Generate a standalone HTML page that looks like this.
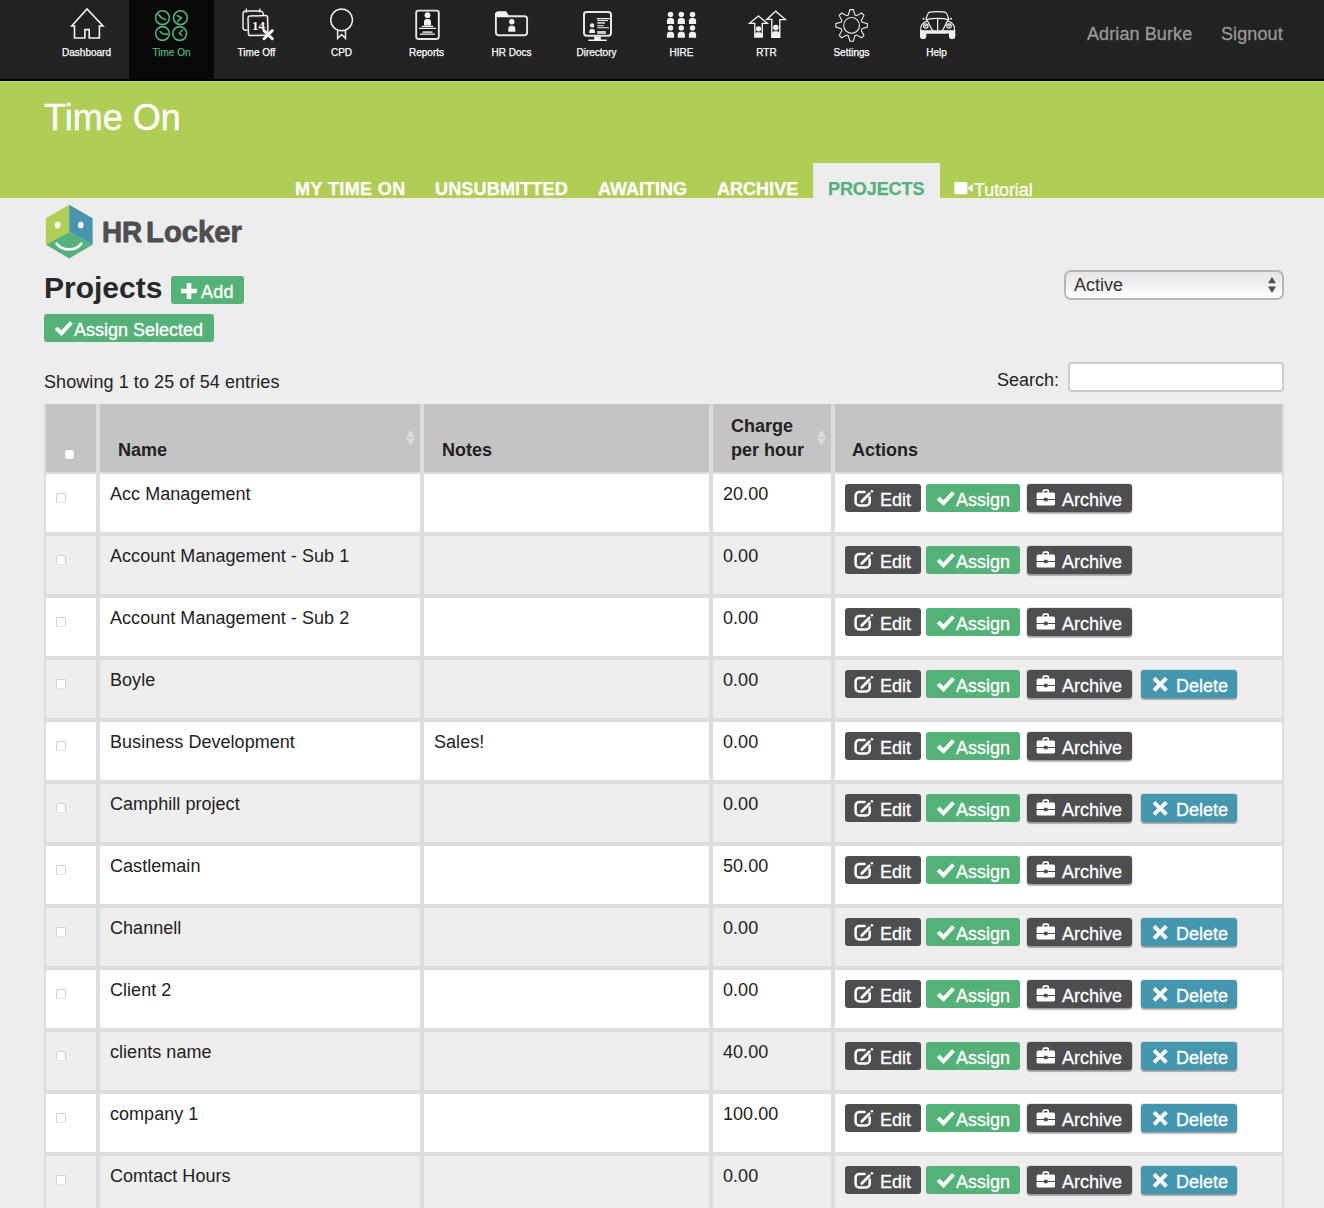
<!DOCTYPE html>
<html lang="en"><head><meta charset="utf-8"><title>Time On - Projects</title>
<style>
*{box-sizing:border-box;margin:0;padding:0}
html,body{width:1324px;height:1208px;overflow:hidden;background:#ededed}
body{font-family:"Liberation Sans",Arial,Helvetica,sans-serif;font-size:18px;color:#222;position:relative}
#nav{position:absolute;left:0;top:0;width:1324px;height:81px;background:#222;border-bottom:2px solid #000}
.ni{position:absolute;top:0;width:85px;height:79px;color:#fff;font-size:10px;text-align:center}
.ni.act{background:#080808;color:#52b27a}
.ni svg{position:absolute;left:0;top:0;width:85px;height:48px;overflow:visible}
.ni .lb{position:absolute;left:0;width:85px;top:47px;line-height:12px;font-size:10px;letter-spacing:0px;-webkit-text-stroke:.25px}
.usr{position:absolute;top:23px;font-size:18px;line-height:22px;color:#999;white-space:nowrap;letter-spacing:.1px;-webkit-text-stroke:.3px}
#band{position:absolute;left:0;top:81px;width:1324px;height:117px;background:#b0ce56;overflow:hidden;box-shadow:inset 0 1px 0 #bcd95d}
#band h1{position:absolute;left:44px;top:16px;font-size:36px;line-height:42px;font-weight:normal;color:#fff;white-space:nowrap;-webkit-text-stroke:.4px}
.tab{position:absolute;top:97px;font-size:18px;line-height:22px;font-weight:bold;color:#fff;white-space:nowrap;letter-spacing:.3px;-webkit-text-stroke:.25px}
#ptab{position:absolute;left:813px;top:82px;width:127px;height:40px;background:#ededed}

h2{position:absolute;left:44px;top:269px;font-size:30px;line-height:38px;font-weight:bold;color:#282828;white-space:nowrap}
.gb{position:absolute;background:#54b177;border-radius:3px;color:#fff;font-size:18px;line-height:22px;white-space:nowrap;-webkit-text-stroke:.3px}
#sel{position:absolute;left:1064px;top:270px;width:220px;height:30px;border:2px solid #b6b6b6;border-radius:7px;background:linear-gradient(#e6e6e6,#efefef 45%,#fdfdfd 85%,#fff);font-size:18px;line-height:26px;color:#333;padding-left:8px}
#sel svg{position:absolute;right:6px;top:5px}
#info{position:absolute;left:44px;top:371px;line-height:22px;white-space:nowrap;letter-spacing:.08px}
#slab{position:absolute;left:997px;top:369px;line-height:22px;white-space:nowrap}
#sin{position:absolute;left:1068px;top:362px;width:216px;height:30px;background:#fff;border:2px solid #ccc;border-radius:4px}
#tbl{position:absolute;left:44px;top:404px;width:1240px;height:804px;background:#dddddd}
.th{position:absolute;top:404px;height:68px;background:#c4c4c4;font-weight:bold;font-size:18px;color:#222}
.th span{position:absolute;white-space:nowrap;line-height:24px}
.tr{position:absolute;left:0;width:1324px;height:58px}
.td{position:absolute;top:0;height:58px}
.odd .td{background:#fff}
.even .td{background:#eeeeee}
.c1{left:46px;width:50px}
.c2{left:100px;width:320px}
.c3{left:424px;width:285px}
.c4{left:713px;width:118px}
.c5{left:835px;width:447px}
.tx{position:absolute;left:10px;top:9px;line-height:22px;white-space:nowrap;letter-spacing:.04px}
.cb{position:absolute;left:10px;top:19px;width:10px;height:10px;border:1px solid #d0d0d0;border-bottom-color:#e6e6e6;border-radius:2px;background:#fff}
.btn{position:absolute;top:10px;height:28px;border-radius:3px;color:#fff;font-size:18px}
.btn .t{position:absolute;top:5px;line-height:22px;white-space:nowrap;-webkit-text-stroke:.3px}
.dk{background:#4d4e50}
.gr{background:#54b177}
.bl{background:#4597b0}
.sh{box-shadow:0 0 0 1px rgba(0,0,0,.09),0 2px 1px rgba(0,0,0,.28)}
.ic{position:absolute;left:0;top:0;width:40px;height:28px}

.sort{position:absolute;width:9px;height:15.500px}
</style></head><body>
<div id="nav"><div class="ni" style="left:44px"><svg viewBox="0 0 85 48"><path d="M27.700 26L43 8.900 59 26H55.400V38H45.200V29.600H40.900V38H30.500V26z" fill="none" stroke="#f2f2f2" stroke-width="1.600" stroke-linejoin="miter"/></svg><span class="lb">Dashboard</span></div>
<div class="ni act" style="left:129px"><svg viewBox="0 0 85 48"><circle cx="33.500" cy="17.700" r="6.900" fill="none" stroke="#52b27a" stroke-width="1.600" stroke-linecap="round" stroke-linejoin="round"/><circle cx="51.400" cy="17.700" r="6.900" fill="none" stroke="#52b27a" stroke-width="1.600" stroke-linecap="round" stroke-linejoin="round"/><circle cx="33.500" cy="33.500" r="6.900" fill="none" stroke="#52b27a" stroke-width="1.600" stroke-linecap="round" stroke-linejoin="round"/><circle cx="50.700" cy="33.500" r="6.900" fill="none" stroke="#52b27a" stroke-width="1.600" stroke-linecap="round" stroke-linejoin="round"/><path d="M29.600 14.600L32.600 17.900 36.500 19.600" fill="none" stroke="#52b27a" stroke-width="1.600" stroke-linecap="round" stroke-linejoin="round"/><path d="M48.300 15.700L52.500 17.700 48.600 21.400" fill="none" stroke="#52b27a" stroke-width="1.600" stroke-linecap="round" stroke-linejoin="round"/><path d="M31.200 31.600L33.800 33.800 38.500 34.400" fill="none" stroke="#52b27a" stroke-width="1.600" stroke-linecap="round" stroke-linejoin="round"/><path d="M53.600 30L50.200 33.300 52.900 35.500" fill="none" stroke="#52b27a" stroke-width="1.600" stroke-linecap="round" stroke-linejoin="round"/></svg><span class="lb">Time On</span></div>
<div class="ni" style="left:214px"><svg viewBox="0 0 85 48"><path d="M33.500 30.300H31.800A2.800 2.800 0 0 1 29 27.500V14A3 3 0 0 1 32 11H46.300A3 3 0 0 1 49.300 14V15.500" fill="none" stroke="#f2f2f2" stroke-width="1.400"/><path d="M32.400 8.400V12.800M45.800 8.400V12.800" fill="none" stroke="#f2f2f2" stroke-width="1.200"/><rect x="34.200" y="15.800" width="19.600" height="19.600" rx="2.200" transform="rotate(-1.5 44 25.600)" fill="#1c1c1c" stroke="#f2f2f2" stroke-width="1.500"/><rect x="36" y="17.600" width="16" height="16" rx=".6" transform="rotate(-1.5 44 25.600)" fill="none" stroke="#555" stroke-width=".5"/><text x="44.400" y="29.500" font-family="Liberation Serif, serif" font-weight="bold" font-size="13" text-anchor="middle" fill="#fff">14</text><path d="M50 30.600L58.300 38.800M58.300 30.600L50 38.800" stroke="#f2f2f2" stroke-width="2.900" stroke-linecap="round" fill="none"/></svg><span class="lb">Time Off</span></div>
<div class="ni" style="left:299px"><svg viewBox="0 0 85 48"><path d="M53.10 19.90 L53.27 20.28 L53.39 20.67 L53.45 21.07 L53.44 21.46 L53.34 21.84 L53.17 22.20 L52.94 22.54 L52.67 22.86 L52.73 23.27 L52.74 23.68 L52.68 24.08 L52.56 24.45 L52.36 24.79 L52.09 25.08 L51.78 25.35 L51.43 25.58 L51.37 25.99 L51.26 26.38 L51.10 26.75 L50.88 27.07 L50.59 27.34 L50.25 27.55 L49.87 27.71 L49.48 27.84 L49.30 28.21 L49.08 28.56 L48.83 28.87 L48.52 29.11 L48.17 29.29 L47.78 29.39 L47.38 29.44 L46.96 29.45 L46.68 29.76 L46.38 30.04 L46.05 30.26 L45.68 30.41 L45.30 30.48 L44.90 30.47 L44.49 30.40 L44.09 30.29 L43.74 30.51 L43.37 30.69 L42.99 30.81 L42.60 30.85 L42.21 30.81 L41.83 30.69 L41.46 30.51 L41.11 30.29 L40.71 30.40 L40.30 30.47 L39.90 30.48 L39.52 30.41 L39.15 30.26 L38.82 30.04 L38.52 29.76 L38.24 29.45 L37.82 29.44 L37.42 29.39 L37.03 29.29 L36.68 29.11 L36.37 28.87 L36.12 28.56 L35.90 28.21 L35.72 27.84 L35.33 27.71 L34.95 27.55 L34.61 27.34 L34.32 27.07 L34.10 26.75 L33.94 26.38 L33.83 25.99 L33.77 25.58 L33.42 25.35 L33.11 25.08 L32.84 24.79 L32.64 24.45 L32.52 24.08 L32.46 23.68 L32.47 23.27 L32.53 22.86 L32.26 22.54 L32.03 22.20 L31.86 21.84 L31.76 21.46 L31.75 21.07 L31.81 20.67 L31.93 20.28 L32.10 19.90 L31.93 19.52 L31.81 19.13 L31.75 18.73 L31.76 18.34 L31.86 17.96 L32.03 17.60 L32.26 17.26 L32.53 16.94 L32.47 16.53 L32.46 16.12 L32.52 15.72 L32.64 15.35 L32.84 15.01 L33.11 14.72 L33.42 14.45 L33.77 14.22 L33.83 13.81 L33.94 13.42 L34.10 13.05 L34.32 12.73 L34.61 12.46 L34.95 12.25 L35.33 12.09 L35.72 11.96 L35.90 11.59 L36.12 11.24 L36.37 10.93 L36.68 10.69 L37.03 10.51 L37.42 10.41 L37.82 10.36 L38.24 10.35 L38.52 10.04 L38.82 9.76 L39.15 9.54 L39.52 9.39 L39.90 9.32 L40.30 9.33 L40.71 9.40 L41.11 9.51 L41.46 9.29 L41.83 9.11 L42.21 8.99 L42.60 8.95 L42.99 8.99 L43.37 9.11 L43.74 9.29 L44.09 9.51 L44.49 9.40 L44.90 9.33 L45.30 9.32 L45.68 9.39 L46.05 9.54 L46.38 9.76 L46.68 10.04 L46.96 10.35 L47.38 10.36 L47.78 10.41 L48.17 10.51 L48.52 10.69 L48.83 10.93 L49.08 11.24 L49.30 11.59 L49.48 11.96 L49.87 12.09 L50.25 12.25 L50.59 12.46 L50.88 12.73 L51.10 13.05 L51.26 13.42 L51.37 13.81 L51.43 14.22 L51.78 14.45 L52.09 14.72 L52.36 15.01 L52.56 15.35 L52.68 15.72 L52.74 16.12 L52.73 16.53 L52.67 16.94 L52.94 17.26 L53.17 17.60 L53.34 17.96 L53.44 18.34 L53.45 18.73 L53.39 19.13 L53.27 19.52 L53.10 19.90z" fill="none" stroke="#f2f2f2" stroke-width="1.500" stroke-linejoin="round"/><path d="M38.600 30.400V38.400L42.600 34.500 46.500 38.400V30" fill="none" stroke="#f2f2f2" stroke-width="1.500"/></svg><span class="lb">CPD</span></div>
<div class="ni" style="left:384px"><svg viewBox="0 0 85 48"><rect x="32.200" y="10.600" width="22.600" height="28.400" rx="2.200" fill="#1b1b1b" stroke="#e6e6e6" stroke-width="1.900"/><circle cx="43.5" cy="15.2" r="2.9" fill="#f2f2f2"/><path d="M40.00 25.6V21.98C40.00 19.30 41.75 19 43.5 19C45.25 19 47.00 19.30 47.00 21.98V25.6z" fill="#f2f2f2"/><path d="M37.800 26.300H49.200M34.900 28.400H52.100M36 34.200H51" stroke="#f2f2f2" stroke-width="1.300" fill="none"/><path d="M38.500 32.100H48.500" stroke="#cfcfcf" stroke-width="1.700" fill="none"/></svg><span class="lb">Reports</span></div>
<div class="ni" style="left:469px"><svg viewBox="0 0 85 48"><path d="M26.900 17.500V14.800A2.600 2.600 0 0 1 29.500 12.200H36.500L39.300 16.200H55.500A2.600 2.600 0 0 1 58.100 18.800V32.600A2.600 2.600 0 0 1 55.500 35.200H29.500A2.600 2.600 0 0 1 26.900 32.600z" fill="none" stroke="#e6e6e6" stroke-width="1.900"/><path d="M26 17.200V14.800A3 3 0 0 1 29 11.800H36.900L39.600 16V17.200z" fill="#f2f2f2"/><circle cx="42.8" cy="21.7" r="2.7" fill="#f2f2f2"/><path d="M39.30 31.7V28.78C39.30 26.10 41.05 25.8 42.8 25.8C44.55 25.8 46.30 26.10 46.30 28.78V31.7z" fill="#f2f2f2"/></svg><span class="lb">HR Docs</span></div>
<div class="ni" style="left:554px"><svg viewBox="0 0 85 48"><rect x="30" y="12.100" width="27" height="23.600" rx="2.600" fill="none" stroke="#e6e6e6" stroke-width="2"/><path d="M40.200 36.500H46.800V39.500H52.800V41H34.300V39.500H40.200z" fill="#f2f2f2"/><circle cx="38.1" cy="25.4" r="2.2" fill="#f2f2f2"/><path d="M35.30 32.9V31.38C35.30 29.30 36.70 29 38.1 29C39.50 29 40.90 29.30 40.90 31.38V32.9z" fill="#f2f2f2"/><path d="M42.800 18.600H55.700M43.300 20.500H54.100M43.300 25.700H49.800M43.300 27.700H55" stroke="#f2f2f2" stroke-width="1.150" fill="none"/><path d="M43.300 22.900H51" stroke="#d0d0d0" stroke-width="1.700" fill="none"/><rect x="43.300" y="31" width="8.600" height="2.900" fill="#d0d0d0"/></svg><span class="lb">Directory</span></div>
<div class="ni" style="left:639px"><svg viewBox="0 0 85 48"><circle cx="31.5" cy="14.5" r="2.75" fill="#f2f2f2"/><path d="M27.90 24.0V21.16C27.90 18.40 29.70 18.1 31.5 18.1C33.30 18.1 35.10 18.40 35.10 21.16V24.0z" fill="#f2f2f2"/><circle cx="31.5" cy="27.9" r="2.7" fill="#f2f2f2"/><path d="M27.90 37.8V34.76C27.90 32.00 29.70 31.7 31.5 31.7C33.30 31.7 35.10 32.00 35.10 34.76V37.8z" fill="#f2f2f2"/><circle cx="42.3" cy="14.5" r="2.75" fill="#f2f2f2"/><path d="M38.70 24.0V21.16C38.70 18.40 40.50 18.1 42.3 18.1C44.10 18.1 45.90 18.40 45.90 21.16V24.0z" fill="#f2f2f2"/><circle cx="42.3" cy="27.9" r="2.7" fill="#f2f2f2"/><path d="M38.70 37.8V34.76C38.70 32.00 40.50 31.7 42.3 31.7C44.10 31.7 45.90 32.00 45.90 34.76V37.8z" fill="#f2f2f2"/><circle cx="53.5" cy="14.5" r="2.75" fill="#f2f2f2"/><path d="M49.90 24.0V21.16C49.90 18.40 51.70 18.1 53.5 18.1C55.30 18.1 57.10 18.40 57.10 21.16V24.0z" fill="#f2f2f2"/><circle cx="53.5" cy="27.9" r="2.7" fill="#f2f2f2"/><path d="M49.90 37.8V34.76C49.90 32.00 51.70 31.7 53.5 31.7C55.30 31.7 57.10 32.00 57.10 34.76V37.8z" fill="#f2f2f2"/></svg><span class="lb">HIRE</span></div>
<div class="ni" style="left:724px"><svg viewBox="0 0 85 48"><path d="M34.400 15.900L25.600 23.300H30.800V37H38.300V23.300H43.300z" fill="none" stroke="#f2f2f2" stroke-width="1.350" stroke-linejoin="miter"/><path d="M51.600 11.200L42.800 19.400H47.800V37.200H55.800V19.600H61.400z" fill="none" stroke="#f2f2f2" stroke-width="1.350" stroke-linejoin="miter"/><circle cx="34.5" cy="28.8" r="2.6" fill="#f2f2f2"/><path d="M30.70 36.8V35.53C30.70 32.60 32.60 32.3 34.5 32.3C36.40 32.3 38.30 32.60 38.30 35.53V36.8z" fill="#f2f2f2"/><circle cx="51.8" cy="27.6" r="2.8" fill="#f2f2f2"/><path d="M47.70 37V34.69C47.70 31.50 49.75 31.2 51.8 31.2C53.85 31.2 55.90 31.50 55.90 34.69V37z" fill="#f2f2f2"/></svg><span class="lb">RTR</span></div>
<div class="ni" style="left:809px"><svg viewBox="0 0 85 48"><path d="M39.27 15.02 L40.93 9.59 L44.27 9.59 L45.93 15.02 L47.59 15.71 L52.60 13.04 L54.96 15.40 L52.29 20.41 L52.98 22.07 L58.41 23.73 L58.41 27.07 L52.98 28.73 L52.29 30.39 L54.96 35.40 L52.60 37.76 L47.59 35.09 L45.93 35.78 L44.27 41.21 L40.93 41.21 L39.27 35.78 L37.61 35.09 L32.60 37.76 L30.24 35.40 L32.91 30.39 L32.22 28.73 L26.79 27.07 L26.79 23.73 L32.22 22.07 L32.91 20.41 L30.24 15.40 L32.60 13.04 L37.61 15.71z" fill="none" stroke="#e8e8e8" stroke-width="1.100" stroke-linejoin="miter"/><circle cx="42.6" cy="25.4" r="7.900" fill="none" stroke="#dcdcdc" stroke-width="1.150"/></svg><span class="lb">Settings</span></div>
<div class="ni" style="left:894px"><svg viewBox="0 0 85 48"><path d="M32 19.300C32.800 16 33.600 13.300 35 12.400C38 11.300 48.600 11.300 51.600 12.400C53 13.300 53.900 16 54.800 19.300" fill="none" stroke="#f2f2f2" stroke-width="1.200" stroke-linecap="round" stroke-linejoin="round"/><path d="M32.600 19.600C38 17.900 49 17.900 54.400 19.600" fill="none" stroke="#f2f2f2" stroke-width="1.200" stroke-linecap="round" stroke-linejoin="round"/><path d="M43.650 18.600V30.600" fill="none" stroke="#f2f2f2" stroke-width="1.200" stroke-linecap="round" stroke-linejoin="round" stroke-width="1.400"/><path d="M32.700 20.200C35.500 23 36.300 28.500 38.900 30.600M54.200 20.200C51.300 23 50.600 28.500 48 30.600" fill="none" stroke="#f2f2f2" stroke-width="1.200" stroke-linecap="round" stroke-linejoin="round"/><path d="M26.600 31C26.300 25.500 28.500 22.800 32.600 21.300M60.600 31C60.900 25.500 58.700 22.800 54.600 21.300" fill="none" stroke="#f2f2f2" stroke-width="1.200" stroke-linecap="round" stroke-linejoin="round"/><circle cx="31.800" cy="26" r="2.200" fill="none" stroke="#f2f2f2" stroke-width="1.200" stroke-linecap="round" stroke-linejoin="round"/><circle cx="55" cy="26" r="2.200" fill="none" stroke="#f2f2f2" stroke-width="1.200" stroke-linecap="round" stroke-linejoin="round"/><circle cx="31.800" cy="25.700" r="1" fill="#ddd"/><circle cx="55" cy="25.700" r="1" fill="#ddd"/><circle cx="29.500" cy="18.700" r="1" fill="#f2f2f2"/><circle cx="57.100" cy="18.700" r="1" fill="#f2f2f2"/><path d="M26 30.200H61.200V33.400H55V35.500A3.100 3.100 0 0 0 61.200 35.800V30.200M26 30.200V35.800A3.100 3.100 0 0 0 32.200 35.800V33.400H55" fill="#f2f2f2"/><path d="M26 30.200H61.200V35.900A3.100 3.100 0 0 1 55 35.900V33.400H32.200V35.900A3.100 3.100 0 0 1 26 35.900z" fill="#f2f2f2"/></svg><span class="lb">Help</span></div>
<span class="usr" style="left:1087px">Adrian Burke</span>
<span class="usr" style="left:1221px">Signout</span>
</div>
<div id="band">
<h1>Time On</h1>
<div id="ptab"></div>
<span class="tab" style="left:295px;letter-spacing:.4px">MY TIME ON</span>
<span class="tab" style="left:435px;letter-spacing:.18px">UNSUBMITTED</span>
<span class="tab" style="left:598px;letter-spacing:0">AWAITING</span>
<span class="tab" style="left:717px;letter-spacing:.03px">ARCHIVE</span>
<span class="tab" style="left:828px;color:#52b27a;letter-spacing:-.09px">PROJECTS</span>
<svg style="position:absolute;left:954px;top:101px" width="20" height="13" viewBox="0 0 20 13"><path d="M1.600 0h10.500A1.300 1.300 0 0 1 13.400 1.300v9.600A1.300 1.300 0 0 1 12.100 12.200h-10.500A1.300 1.300 0 0 1 .3 10.900v-9.600A1.300 1.300 0 0 1 1.600 0zM13.400 6.200L18.800 2v8z" fill="#fff"/></svg>
<span class="tab" style="left:974px;top:98px;font-weight:normal;letter-spacing:-.1px">Tutorial</span>
</div>
<svg id="logo" width="210" height="62" viewBox="40 198 210 62" style="position:absolute;left:40px;top:198px"><path d="M69.200 204.800L45.900 218.200V244.800L69.200 232z" fill="#b1cf57"/><path d="M69.200 204.800L92.600 218.200V244.800L69.200 232z" fill="#4796ae"/><path d="M69.200 232L92.600 244.800 69.200 258.400 45.900 244.800z" fill="#56b17a"/><ellipse cx="57.500" cy="225" rx="2.850" ry="3.350" fill="#fff"/><ellipse cx="80.800" cy="225" rx="2.850" ry="3.350" fill="#fff"/><ellipse cx="88" cy="228.600" rx="1.600" ry=".8" transform="rotate(25 88 228.600)" fill="#56b17a"/><path d="M56.600 243.500C62 251.300 76 251.300 81.300 243.500" fill="none" stroke="#fff" stroke-width="2.600" stroke-linecap="round"/><text x="102" y="241.600" font-family="Liberation Sans, Arial, sans-serif" font-weight="bold" font-size="29.300" fill="#4d4e50" stroke="#4d4e50" stroke-width=".8" stroke-linejoin="round" textLength="40.200" lengthAdjust="spacingAndGlyphs">HR</text><text x="146.100" y="241.600" font-family="Liberation Sans, Arial, sans-serif" font-weight="bold" font-size="29.300" fill="#4d4e50" stroke="#4d4e50" stroke-width=".8" stroke-linejoin="round" textLength="95.900" lengthAdjust="spacingAndGlyphs">Locker</text></svg>
<h2>Projects</h2>
<span class="gb" style="left:171px;top:276px;width:73px;height:28px"><svg style="position:absolute;left:10px;top:6.500px" width="16" height="16" viewBox="0 0 16 16"><path d="M5.700 0h4.600v5.700H16v4.600h-5.700V16H5.700v-5.700H0V5.700h5.700z" fill="#fff"/></svg><span style="position:absolute;left:30px;top:5px;letter-spacing:.3px">Add</span></span>
<span class="gb" style="left:44px;top:314px;width:170px;height:28px"><svg class="ic" viewBox="0 0 40 28"><path d="M11.100 15.400L13.600 12.900 17.400 16.700 26 7.500 28.400 9.900 17.500 21.700z" fill="#fff" stroke="#fff" stroke-width=".7" stroke-linejoin="miter"/></svg><span style="position:absolute;left:30px;top:5px">Assign Selected</span></span>
<div id="sel">Active<svg width="8" height="16" viewBox="0 0 8 16"><path d="M4 0L8 6.200H0zM4 16L0 9.600h8z" fill="#4d4d4d"/></svg></div>
<div id="info">Showing 1 to 25 of 54 entries</div>
<div id="slab">Search:</div>
<div id="sin"></div>
<div id="tbl"></div>
<div class="th" style="left:46px;width:50px"><i style="position:absolute;left:19px;top:46px;width:9px;height:9px;background:#fff;border-radius:2px;box-shadow:0 0 1px rgba(0,0,0,.3)"></i></div>
<div class="th" style="left:100px;width:320px"><span style="left:18px;top:34px">Name</span><svg class="sort" style="left:306px;top:26px" viewBox="0 0 9 15.500"><path d="M4.500 0l4.500 7.200H0zM4.500 15.500L0 8.300h9z" fill="#dcdcdc"/></svg></div>
<div class="th" style="left:424px;width:285px"><span style="left:18px;top:34px">Notes</span></div>
<div class="th" style="left:713px;width:118px"><span style="left:18px;top:10px">Charge<br>per hour</span><svg class="sort" style="left:104px;top:26px" viewBox="0 0 9 15.500"><path d="M4.500 0l4.500 7.200H0zM4.500 15.500L0 8.300h9z" fill="#dcdcdc"/></svg></div>
<div class="th" style="left:835px;width:447px"><span style="left:17px;top:34px">Actions</span></div>
<div class="tr odd" style="top:474px">
<div class="td c1"><span class="cb"></span></div>
<div class="td c2"><span class="tx">Acc Management</span></div>
<div class="td c3"><span class="tx"></span></div>
<div class="td c4"><span class="tx">20.00</span></div>
<div class="td c5"><span class="btn dk" style="left:10px;width:76px"><svg class="ic" viewBox="0 0 40 28"><path d="M19.600 8.100H14.200A3.600 3.600 0 0 0 10.600 11.700V17.900A3.600 3.600 0 0 0 14.200 21.500H21.100A3.600 3.600 0 0 0 24.700 17.900V13.400" fill="none" stroke="#fff" stroke-width="2.500" stroke-linecap="round"/><path d="M16.700 17.500L24.300 9.700" fill="none" stroke="#fff" stroke-width="2.700" stroke-linecap="round"/><circle cx="26.900" cy="7.200" r="1.250" fill="#fff"/></svg><span class="t" style="left:35px">Edit</span></span><span class="btn gr" style="left:91px;width:94px"><svg class="ic" viewBox="0 0 40 28"><path d="M11.100 15.400L13.600 12.900 17.400 16.700 26 7.500 28.400 9.900 17.500 21.700z" fill="#fff" stroke="#fff" stroke-width=".7" stroke-linejoin="miter"/></svg><span class="t" style="left:30px">Assign</span></span><span class="btn dk sh" style="left:192px;width:105px"><svg class="ic" viewBox="0 0 40 28"><path d="M15.500 8.400V6.800A1.500 1.500 0 0 1 17 5.300H20.500A1.500 1.500 0 0 1 22 6.800V8.400H26.500A1.500 1.500 0 0 1 28 9.900V14.900H20.700V13.700H16.900V14.900H9.600V9.900A1.500 1.500 0 0 1 11.100 8.400zM17.100 6.900V8.400H20.400V6.900zM9.600 16.100H16.900V17.200H20.700V16.100H28V20A1.500 1.500 0 0 1 26.500 21.500H11.100A1.500 1.500 0 0 1 9.600 20z" fill="#fff"/></svg><span class="t" style="left:35px">Archive</span></span></div>
</div>
<div class="tr even" style="top:536px">
<div class="td c1"><span class="cb"></span></div>
<div class="td c2"><span class="tx">Account Management - Sub 1</span></div>
<div class="td c3"><span class="tx"></span></div>
<div class="td c4"><span class="tx">0.00</span></div>
<div class="td c5"><span class="btn dk" style="left:10px;width:76px"><svg class="ic" viewBox="0 0 40 28"><path d="M19.600 8.100H14.200A3.600 3.600 0 0 0 10.600 11.700V17.900A3.600 3.600 0 0 0 14.200 21.500H21.100A3.600 3.600 0 0 0 24.700 17.900V13.400" fill="none" stroke="#fff" stroke-width="2.500" stroke-linecap="round"/><path d="M16.700 17.500L24.300 9.700" fill="none" stroke="#fff" stroke-width="2.700" stroke-linecap="round"/><circle cx="26.900" cy="7.200" r="1.250" fill="#fff"/></svg><span class="t" style="left:35px">Edit</span></span><span class="btn gr" style="left:91px;width:94px"><svg class="ic" viewBox="0 0 40 28"><path d="M11.100 15.400L13.600 12.900 17.400 16.700 26 7.500 28.400 9.900 17.500 21.700z" fill="#fff" stroke="#fff" stroke-width=".7" stroke-linejoin="miter"/></svg><span class="t" style="left:30px">Assign</span></span><span class="btn dk sh" style="left:192px;width:105px"><svg class="ic" viewBox="0 0 40 28"><path d="M15.500 8.400V6.800A1.500 1.500 0 0 1 17 5.300H20.500A1.500 1.500 0 0 1 22 6.800V8.400H26.500A1.500 1.500 0 0 1 28 9.900V14.900H20.700V13.700H16.900V14.900H9.600V9.900A1.500 1.500 0 0 1 11.100 8.400zM17.100 6.900V8.400H20.400V6.900zM9.600 16.100H16.900V17.200H20.700V16.100H28V20A1.500 1.500 0 0 1 26.500 21.500H11.100A1.500 1.500 0 0 1 9.600 20z" fill="#fff"/></svg><span class="t" style="left:35px">Archive</span></span></div>
</div>
<div class="tr odd" style="top:598px">
<div class="td c1"><span class="cb"></span></div>
<div class="td c2"><span class="tx">Account Management - Sub 2</span></div>
<div class="td c3"><span class="tx"></span></div>
<div class="td c4"><span class="tx">0.00</span></div>
<div class="td c5"><span class="btn dk" style="left:10px;width:76px"><svg class="ic" viewBox="0 0 40 28"><path d="M19.600 8.100H14.200A3.600 3.600 0 0 0 10.600 11.700V17.900A3.600 3.600 0 0 0 14.200 21.500H21.100A3.600 3.600 0 0 0 24.700 17.900V13.400" fill="none" stroke="#fff" stroke-width="2.500" stroke-linecap="round"/><path d="M16.700 17.500L24.300 9.700" fill="none" stroke="#fff" stroke-width="2.700" stroke-linecap="round"/><circle cx="26.900" cy="7.200" r="1.250" fill="#fff"/></svg><span class="t" style="left:35px">Edit</span></span><span class="btn gr" style="left:91px;width:94px"><svg class="ic" viewBox="0 0 40 28"><path d="M11.100 15.400L13.600 12.900 17.400 16.700 26 7.500 28.400 9.900 17.500 21.700z" fill="#fff" stroke="#fff" stroke-width=".7" stroke-linejoin="miter"/></svg><span class="t" style="left:30px">Assign</span></span><span class="btn dk sh" style="left:192px;width:105px"><svg class="ic" viewBox="0 0 40 28"><path d="M15.500 8.400V6.800A1.500 1.500 0 0 1 17 5.300H20.500A1.500 1.500 0 0 1 22 6.800V8.400H26.500A1.500 1.500 0 0 1 28 9.900V14.900H20.700V13.700H16.900V14.900H9.600V9.900A1.500 1.500 0 0 1 11.100 8.400zM17.100 6.900V8.400H20.400V6.900zM9.600 16.100H16.900V17.200H20.700V16.100H28V20A1.500 1.500 0 0 1 26.500 21.500H11.100A1.500 1.500 0 0 1 9.600 20z" fill="#fff"/></svg><span class="t" style="left:35px">Archive</span></span></div>
</div>
<div class="tr even" style="top:660px">
<div class="td c1"><span class="cb"></span></div>
<div class="td c2"><span class="tx">Boyle</span></div>
<div class="td c3"><span class="tx"></span></div>
<div class="td c4"><span class="tx">0.00</span></div>
<div class="td c5"><span class="btn dk" style="left:10px;width:76px"><svg class="ic" viewBox="0 0 40 28"><path d="M19.600 8.100H14.200A3.600 3.600 0 0 0 10.600 11.700V17.900A3.600 3.600 0 0 0 14.200 21.500H21.100A3.600 3.600 0 0 0 24.700 17.900V13.400" fill="none" stroke="#fff" stroke-width="2.500" stroke-linecap="round"/><path d="M16.700 17.500L24.300 9.700" fill="none" stroke="#fff" stroke-width="2.700" stroke-linecap="round"/><circle cx="26.900" cy="7.200" r="1.250" fill="#fff"/></svg><span class="t" style="left:35px">Edit</span></span><span class="btn gr" style="left:91px;width:94px"><svg class="ic" viewBox="0 0 40 28"><path d="M11.100 15.400L13.600 12.900 17.400 16.700 26 7.500 28.400 9.900 17.500 21.700z" fill="#fff" stroke="#fff" stroke-width=".7" stroke-linejoin="miter"/></svg><span class="t" style="left:30px">Assign</span></span><span class="btn dk sh" style="left:192px;width:105px"><svg class="ic" viewBox="0 0 40 28"><path d="M15.500 8.400V6.800A1.500 1.500 0 0 1 17 5.300H20.500A1.500 1.500 0 0 1 22 6.800V8.400H26.500A1.500 1.500 0 0 1 28 9.900V14.900H20.700V13.700H16.900V14.900H9.600V9.900A1.500 1.500 0 0 1 11.100 8.400zM17.100 6.900V8.400H20.400V6.900zM9.600 16.100H16.900V17.200H20.700V16.100H28V20A1.500 1.500 0 0 1 26.500 21.500H11.100A1.500 1.500 0 0 1 9.600 20z" fill="#fff"/></svg><span class="t" style="left:35px">Archive</span></span><span class="btn bl sh" style="left:306px;width:96px"><svg class="ic" viewBox="0 0 40 28"><path d="M14.400 7.300L19.200 12.100 24 7.300 26.400 9.700 21.600 14.300 26.400 19 24 21.400 19.200 16.600 14.400 21.400 12 19 16.800 14.300 12 9.700z" fill="#fff" stroke="#fff" stroke-width=".7" stroke-linejoin="round"/></svg><span class="t" style="left:35px">Delete</span></span></div>
</div>
<div class="tr odd" style="top:722px">
<div class="td c1"><span class="cb"></span></div>
<div class="td c2"><span class="tx">Business Development</span></div>
<div class="td c3"><span class="tx">Sales!</span></div>
<div class="td c4"><span class="tx">0.00</span></div>
<div class="td c5"><span class="btn dk" style="left:10px;width:76px"><svg class="ic" viewBox="0 0 40 28"><path d="M19.600 8.100H14.200A3.600 3.600 0 0 0 10.600 11.700V17.900A3.600 3.600 0 0 0 14.200 21.500H21.100A3.600 3.600 0 0 0 24.700 17.900V13.400" fill="none" stroke="#fff" stroke-width="2.500" stroke-linecap="round"/><path d="M16.700 17.500L24.300 9.700" fill="none" stroke="#fff" stroke-width="2.700" stroke-linecap="round"/><circle cx="26.900" cy="7.200" r="1.250" fill="#fff"/></svg><span class="t" style="left:35px">Edit</span></span><span class="btn gr" style="left:91px;width:94px"><svg class="ic" viewBox="0 0 40 28"><path d="M11.100 15.400L13.600 12.900 17.400 16.700 26 7.500 28.400 9.900 17.500 21.700z" fill="#fff" stroke="#fff" stroke-width=".7" stroke-linejoin="miter"/></svg><span class="t" style="left:30px">Assign</span></span><span class="btn dk sh" style="left:192px;width:105px"><svg class="ic" viewBox="0 0 40 28"><path d="M15.500 8.400V6.800A1.500 1.500 0 0 1 17 5.300H20.500A1.500 1.500 0 0 1 22 6.800V8.400H26.500A1.500 1.500 0 0 1 28 9.900V14.900H20.700V13.700H16.900V14.900H9.600V9.900A1.500 1.500 0 0 1 11.100 8.400zM17.100 6.900V8.400H20.400V6.900zM9.600 16.100H16.900V17.200H20.700V16.100H28V20A1.500 1.500 0 0 1 26.500 21.500H11.100A1.500 1.500 0 0 1 9.600 20z" fill="#fff"/></svg><span class="t" style="left:35px">Archive</span></span></div>
</div>
<div class="tr even" style="top:784px">
<div class="td c1"><span class="cb"></span></div>
<div class="td c2"><span class="tx">Camphill project</span></div>
<div class="td c3"><span class="tx"></span></div>
<div class="td c4"><span class="tx">0.00</span></div>
<div class="td c5"><span class="btn dk" style="left:10px;width:76px"><svg class="ic" viewBox="0 0 40 28"><path d="M19.600 8.100H14.200A3.600 3.600 0 0 0 10.600 11.700V17.900A3.600 3.600 0 0 0 14.200 21.500H21.100A3.600 3.600 0 0 0 24.700 17.900V13.400" fill="none" stroke="#fff" stroke-width="2.500" stroke-linecap="round"/><path d="M16.700 17.500L24.300 9.700" fill="none" stroke="#fff" stroke-width="2.700" stroke-linecap="round"/><circle cx="26.900" cy="7.200" r="1.250" fill="#fff"/></svg><span class="t" style="left:35px">Edit</span></span><span class="btn gr" style="left:91px;width:94px"><svg class="ic" viewBox="0 0 40 28"><path d="M11.100 15.400L13.600 12.900 17.400 16.700 26 7.500 28.400 9.900 17.500 21.700z" fill="#fff" stroke="#fff" stroke-width=".7" stroke-linejoin="miter"/></svg><span class="t" style="left:30px">Assign</span></span><span class="btn dk sh" style="left:192px;width:105px"><svg class="ic" viewBox="0 0 40 28"><path d="M15.500 8.400V6.800A1.500 1.500 0 0 1 17 5.300H20.500A1.500 1.500 0 0 1 22 6.800V8.400H26.500A1.500 1.500 0 0 1 28 9.900V14.900H20.700V13.700H16.900V14.900H9.600V9.900A1.500 1.500 0 0 1 11.100 8.400zM17.100 6.900V8.400H20.400V6.900zM9.600 16.100H16.900V17.200H20.700V16.100H28V20A1.500 1.500 0 0 1 26.500 21.500H11.100A1.500 1.500 0 0 1 9.600 20z" fill="#fff"/></svg><span class="t" style="left:35px">Archive</span></span><span class="btn bl sh" style="left:306px;width:96px"><svg class="ic" viewBox="0 0 40 28"><path d="M14.400 7.300L19.200 12.100 24 7.300 26.400 9.700 21.600 14.300 26.400 19 24 21.400 19.200 16.600 14.400 21.400 12 19 16.800 14.300 12 9.700z" fill="#fff" stroke="#fff" stroke-width=".7" stroke-linejoin="round"/></svg><span class="t" style="left:35px">Delete</span></span></div>
</div>
<div class="tr odd" style="top:846px">
<div class="td c1"><span class="cb"></span></div>
<div class="td c2"><span class="tx">Castlemain</span></div>
<div class="td c3"><span class="tx"></span></div>
<div class="td c4"><span class="tx">50.00</span></div>
<div class="td c5"><span class="btn dk" style="left:10px;width:76px"><svg class="ic" viewBox="0 0 40 28"><path d="M19.600 8.100H14.200A3.600 3.600 0 0 0 10.600 11.700V17.900A3.600 3.600 0 0 0 14.200 21.500H21.100A3.600 3.600 0 0 0 24.700 17.900V13.400" fill="none" stroke="#fff" stroke-width="2.500" stroke-linecap="round"/><path d="M16.700 17.500L24.300 9.700" fill="none" stroke="#fff" stroke-width="2.700" stroke-linecap="round"/><circle cx="26.900" cy="7.200" r="1.250" fill="#fff"/></svg><span class="t" style="left:35px">Edit</span></span><span class="btn gr" style="left:91px;width:94px"><svg class="ic" viewBox="0 0 40 28"><path d="M11.100 15.400L13.600 12.900 17.400 16.700 26 7.500 28.400 9.900 17.500 21.700z" fill="#fff" stroke="#fff" stroke-width=".7" stroke-linejoin="miter"/></svg><span class="t" style="left:30px">Assign</span></span><span class="btn dk sh" style="left:192px;width:105px"><svg class="ic" viewBox="0 0 40 28"><path d="M15.500 8.400V6.800A1.500 1.500 0 0 1 17 5.300H20.500A1.500 1.500 0 0 1 22 6.800V8.400H26.500A1.500 1.500 0 0 1 28 9.900V14.900H20.700V13.700H16.900V14.900H9.600V9.900A1.500 1.500 0 0 1 11.100 8.400zM17.100 6.900V8.400H20.400V6.900zM9.600 16.100H16.900V17.200H20.700V16.100H28V20A1.500 1.500 0 0 1 26.500 21.500H11.100A1.500 1.500 0 0 1 9.600 20z" fill="#fff"/></svg><span class="t" style="left:35px">Archive</span></span></div>
</div>
<div class="tr even" style="top:908px">
<div class="td c1"><span class="cb"></span></div>
<div class="td c2"><span class="tx">Channell</span></div>
<div class="td c3"><span class="tx"></span></div>
<div class="td c4"><span class="tx">0.00</span></div>
<div class="td c5"><span class="btn dk" style="left:10px;width:76px"><svg class="ic" viewBox="0 0 40 28"><path d="M19.600 8.100H14.200A3.600 3.600 0 0 0 10.600 11.700V17.900A3.600 3.600 0 0 0 14.200 21.500H21.100A3.600 3.600 0 0 0 24.700 17.900V13.400" fill="none" stroke="#fff" stroke-width="2.500" stroke-linecap="round"/><path d="M16.700 17.500L24.300 9.700" fill="none" stroke="#fff" stroke-width="2.700" stroke-linecap="round"/><circle cx="26.900" cy="7.200" r="1.250" fill="#fff"/></svg><span class="t" style="left:35px">Edit</span></span><span class="btn gr" style="left:91px;width:94px"><svg class="ic" viewBox="0 0 40 28"><path d="M11.100 15.400L13.600 12.900 17.400 16.700 26 7.500 28.400 9.900 17.500 21.700z" fill="#fff" stroke="#fff" stroke-width=".7" stroke-linejoin="miter"/></svg><span class="t" style="left:30px">Assign</span></span><span class="btn dk sh" style="left:192px;width:105px"><svg class="ic" viewBox="0 0 40 28"><path d="M15.500 8.400V6.800A1.500 1.500 0 0 1 17 5.300H20.500A1.500 1.500 0 0 1 22 6.800V8.400H26.500A1.500 1.500 0 0 1 28 9.900V14.900H20.700V13.700H16.900V14.900H9.600V9.900A1.500 1.500 0 0 1 11.100 8.400zM17.100 6.900V8.400H20.400V6.900zM9.600 16.100H16.900V17.200H20.700V16.100H28V20A1.500 1.500 0 0 1 26.500 21.500H11.100A1.500 1.500 0 0 1 9.600 20z" fill="#fff"/></svg><span class="t" style="left:35px">Archive</span></span><span class="btn bl sh" style="left:306px;width:96px"><svg class="ic" viewBox="0 0 40 28"><path d="M14.400 7.300L19.200 12.100 24 7.300 26.400 9.700 21.600 14.300 26.400 19 24 21.400 19.200 16.600 14.400 21.400 12 19 16.800 14.300 12 9.700z" fill="#fff" stroke="#fff" stroke-width=".7" stroke-linejoin="round"/></svg><span class="t" style="left:35px">Delete</span></span></div>
</div>
<div class="tr odd" style="top:970px">
<div class="td c1"><span class="cb"></span></div>
<div class="td c2"><span class="tx">Client 2</span></div>
<div class="td c3"><span class="tx"></span></div>
<div class="td c4"><span class="tx">0.00</span></div>
<div class="td c5"><span class="btn dk" style="left:10px;width:76px"><svg class="ic" viewBox="0 0 40 28"><path d="M19.600 8.100H14.200A3.600 3.600 0 0 0 10.600 11.700V17.900A3.600 3.600 0 0 0 14.200 21.500H21.100A3.600 3.600 0 0 0 24.700 17.900V13.400" fill="none" stroke="#fff" stroke-width="2.500" stroke-linecap="round"/><path d="M16.700 17.500L24.300 9.700" fill="none" stroke="#fff" stroke-width="2.700" stroke-linecap="round"/><circle cx="26.900" cy="7.200" r="1.250" fill="#fff"/></svg><span class="t" style="left:35px">Edit</span></span><span class="btn gr" style="left:91px;width:94px"><svg class="ic" viewBox="0 0 40 28"><path d="M11.100 15.400L13.600 12.900 17.400 16.700 26 7.500 28.400 9.900 17.500 21.700z" fill="#fff" stroke="#fff" stroke-width=".7" stroke-linejoin="miter"/></svg><span class="t" style="left:30px">Assign</span></span><span class="btn dk sh" style="left:192px;width:105px"><svg class="ic" viewBox="0 0 40 28"><path d="M15.500 8.400V6.800A1.500 1.500 0 0 1 17 5.300H20.500A1.500 1.500 0 0 1 22 6.800V8.400H26.500A1.500 1.500 0 0 1 28 9.900V14.900H20.700V13.700H16.900V14.900H9.600V9.900A1.500 1.500 0 0 1 11.100 8.400zM17.100 6.900V8.400H20.400V6.900zM9.600 16.100H16.900V17.200H20.700V16.100H28V20A1.500 1.500 0 0 1 26.500 21.500H11.100A1.500 1.500 0 0 1 9.600 20z" fill="#fff"/></svg><span class="t" style="left:35px">Archive</span></span><span class="btn bl sh" style="left:306px;width:96px"><svg class="ic" viewBox="0 0 40 28"><path d="M14.400 7.300L19.200 12.100 24 7.300 26.400 9.700 21.600 14.300 26.400 19 24 21.400 19.200 16.600 14.400 21.400 12 19 16.800 14.300 12 9.700z" fill="#fff" stroke="#fff" stroke-width=".7" stroke-linejoin="round"/></svg><span class="t" style="left:35px">Delete</span></span></div>
</div>
<div class="tr even" style="top:1032px">
<div class="td c1"><span class="cb"></span></div>
<div class="td c2"><span class="tx">clients name</span></div>
<div class="td c3"><span class="tx"></span></div>
<div class="td c4"><span class="tx">40.00</span></div>
<div class="td c5"><span class="btn dk" style="left:10px;width:76px"><svg class="ic" viewBox="0 0 40 28"><path d="M19.600 8.100H14.200A3.600 3.600 0 0 0 10.600 11.700V17.900A3.600 3.600 0 0 0 14.200 21.500H21.100A3.600 3.600 0 0 0 24.700 17.900V13.400" fill="none" stroke="#fff" stroke-width="2.500" stroke-linecap="round"/><path d="M16.700 17.500L24.300 9.700" fill="none" stroke="#fff" stroke-width="2.700" stroke-linecap="round"/><circle cx="26.900" cy="7.200" r="1.250" fill="#fff"/></svg><span class="t" style="left:35px">Edit</span></span><span class="btn gr" style="left:91px;width:94px"><svg class="ic" viewBox="0 0 40 28"><path d="M11.100 15.400L13.600 12.900 17.400 16.700 26 7.500 28.400 9.900 17.500 21.700z" fill="#fff" stroke="#fff" stroke-width=".7" stroke-linejoin="miter"/></svg><span class="t" style="left:30px">Assign</span></span><span class="btn dk sh" style="left:192px;width:105px"><svg class="ic" viewBox="0 0 40 28"><path d="M15.500 8.400V6.800A1.500 1.500 0 0 1 17 5.300H20.500A1.500 1.500 0 0 1 22 6.800V8.400H26.500A1.500 1.500 0 0 1 28 9.900V14.900H20.700V13.700H16.900V14.900H9.600V9.900A1.500 1.500 0 0 1 11.100 8.400zM17.100 6.900V8.400H20.400V6.900zM9.600 16.100H16.900V17.200H20.700V16.100H28V20A1.500 1.500 0 0 1 26.500 21.500H11.100A1.500 1.500 0 0 1 9.600 20z" fill="#fff"/></svg><span class="t" style="left:35px">Archive</span></span><span class="btn bl sh" style="left:306px;width:96px"><svg class="ic" viewBox="0 0 40 28"><path d="M14.400 7.300L19.200 12.100 24 7.300 26.400 9.700 21.600 14.300 26.400 19 24 21.400 19.200 16.600 14.400 21.400 12 19 16.800 14.300 12 9.700z" fill="#fff" stroke="#fff" stroke-width=".7" stroke-linejoin="round"/></svg><span class="t" style="left:35px">Delete</span></span></div>
</div>
<div class="tr odd" style="top:1094px">
<div class="td c1"><span class="cb"></span></div>
<div class="td c2"><span class="tx">company 1</span></div>
<div class="td c3"><span class="tx"></span></div>
<div class="td c4"><span class="tx">100.00</span></div>
<div class="td c5"><span class="btn dk" style="left:10px;width:76px"><svg class="ic" viewBox="0 0 40 28"><path d="M19.600 8.100H14.200A3.600 3.600 0 0 0 10.600 11.700V17.900A3.600 3.600 0 0 0 14.200 21.500H21.100A3.600 3.600 0 0 0 24.700 17.900V13.400" fill="none" stroke="#fff" stroke-width="2.500" stroke-linecap="round"/><path d="M16.700 17.500L24.300 9.700" fill="none" stroke="#fff" stroke-width="2.700" stroke-linecap="round"/><circle cx="26.900" cy="7.200" r="1.250" fill="#fff"/></svg><span class="t" style="left:35px">Edit</span></span><span class="btn gr" style="left:91px;width:94px"><svg class="ic" viewBox="0 0 40 28"><path d="M11.100 15.400L13.600 12.900 17.400 16.700 26 7.500 28.400 9.900 17.500 21.700z" fill="#fff" stroke="#fff" stroke-width=".7" stroke-linejoin="miter"/></svg><span class="t" style="left:30px">Assign</span></span><span class="btn dk sh" style="left:192px;width:105px"><svg class="ic" viewBox="0 0 40 28"><path d="M15.500 8.400V6.800A1.500 1.500 0 0 1 17 5.300H20.500A1.500 1.500 0 0 1 22 6.800V8.400H26.500A1.500 1.500 0 0 1 28 9.900V14.900H20.700V13.700H16.900V14.900H9.600V9.900A1.500 1.500 0 0 1 11.100 8.400zM17.100 6.900V8.400H20.400V6.900zM9.600 16.100H16.900V17.200H20.700V16.100H28V20A1.500 1.500 0 0 1 26.500 21.500H11.100A1.500 1.500 0 0 1 9.600 20z" fill="#fff"/></svg><span class="t" style="left:35px">Archive</span></span><span class="btn bl sh" style="left:306px;width:96px"><svg class="ic" viewBox="0 0 40 28"><path d="M14.400 7.300L19.200 12.100 24 7.300 26.400 9.700 21.600 14.300 26.400 19 24 21.400 19.200 16.600 14.400 21.400 12 19 16.800 14.300 12 9.700z" fill="#fff" stroke="#fff" stroke-width=".7" stroke-linejoin="round"/></svg><span class="t" style="left:35px">Delete</span></span></div>
</div>
<div class="tr even" style="top:1156px">
<div class="td c1"><span class="cb"></span></div>
<div class="td c2"><span class="tx">Comtact Hours</span></div>
<div class="td c3"><span class="tx"></span></div>
<div class="td c4"><span class="tx">0.00</span></div>
<div class="td c5"><span class="btn dk" style="left:10px;width:76px"><svg class="ic" viewBox="0 0 40 28"><path d="M19.600 8.100H14.200A3.600 3.600 0 0 0 10.600 11.700V17.900A3.600 3.600 0 0 0 14.200 21.500H21.100A3.600 3.600 0 0 0 24.700 17.900V13.400" fill="none" stroke="#fff" stroke-width="2.500" stroke-linecap="round"/><path d="M16.700 17.500L24.300 9.700" fill="none" stroke="#fff" stroke-width="2.700" stroke-linecap="round"/><circle cx="26.900" cy="7.200" r="1.250" fill="#fff"/></svg><span class="t" style="left:35px">Edit</span></span><span class="btn gr" style="left:91px;width:94px"><svg class="ic" viewBox="0 0 40 28"><path d="M11.100 15.400L13.600 12.900 17.400 16.700 26 7.500 28.400 9.900 17.500 21.700z" fill="#fff" stroke="#fff" stroke-width=".7" stroke-linejoin="miter"/></svg><span class="t" style="left:30px">Assign</span></span><span class="btn dk sh" style="left:192px;width:105px"><svg class="ic" viewBox="0 0 40 28"><path d="M15.500 8.400V6.800A1.500 1.500 0 0 1 17 5.300H20.500A1.500 1.500 0 0 1 22 6.800V8.400H26.500A1.500 1.500 0 0 1 28 9.900V14.900H20.700V13.700H16.900V14.900H9.600V9.900A1.500 1.500 0 0 1 11.100 8.400zM17.100 6.900V8.400H20.400V6.900zM9.600 16.100H16.900V17.200H20.700V16.100H28V20A1.500 1.500 0 0 1 26.500 21.500H11.100A1.500 1.500 0 0 1 9.600 20z" fill="#fff"/></svg><span class="t" style="left:35px">Archive</span></span><span class="btn bl sh" style="left:306px;width:96px"><svg class="ic" viewBox="0 0 40 28"><path d="M14.400 7.300L19.200 12.100 24 7.300 26.400 9.700 21.600 14.300 26.400 19 24 21.400 19.200 16.600 14.400 21.400 12 19 16.800 14.300 12 9.700z" fill="#fff" stroke="#fff" stroke-width=".7" stroke-linejoin="round"/></svg><span class="t" style="left:35px">Delete</span></span></div>
</div>
</body></html>
